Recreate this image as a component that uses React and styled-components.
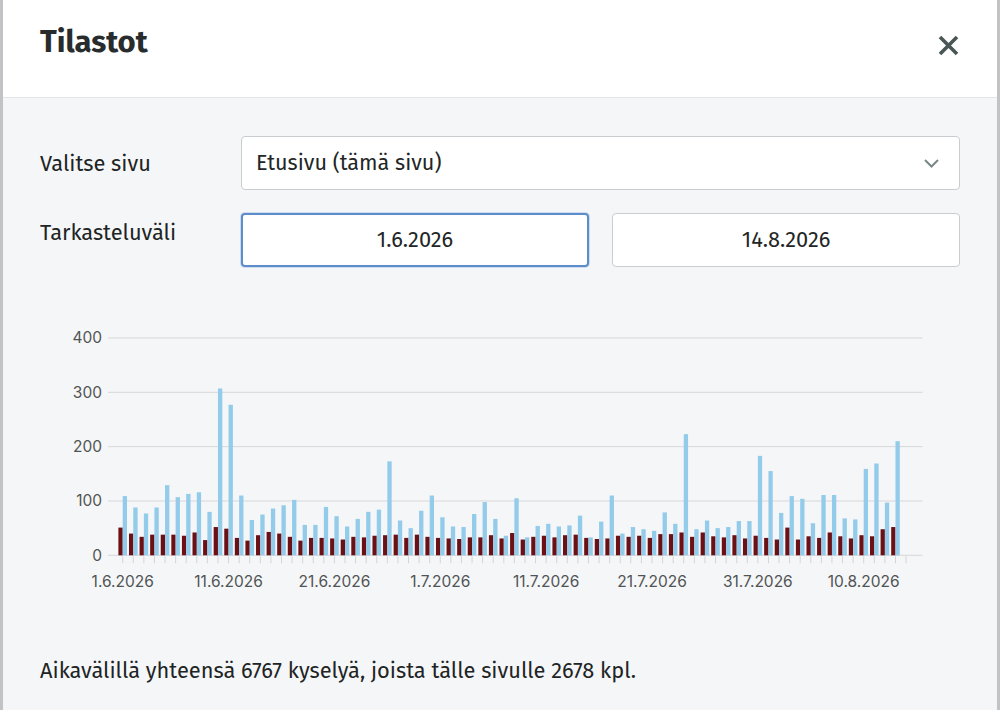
import React from 'react';
import styled, { createGlobalStyle } from 'styled-components';

const FONT = `"Fira Sans", "Roboto", "Noto Sans", sans-serif`;

const GlobalStyle = createGlobalStyle`
  html, body { margin: 0; padding: 0; }
  body {
    background: #c2c3c4;
    font-family: ${FONT};
    color: #222626;
  }
  * { box-sizing: border-box; }
`;

const Backdrop = styled.div`
  display: flex;
  justify-content: center;
  padding: 0 3px;
  min-height: 710px;
`;

const Dialog = styled.div`
  flex: 1;
  display: flex;
  flex-direction: column;
  background: #f5f6f8;
  min-height: 710px;
`;

const Header = styled.header`
  height: 98px;
  background: #ffffff;
  border-bottom: 1px solid #e3e6e9;
  display: flex;
  align-items: flex-start;
  justify-content: space-between;
  padding: 22px 38px 0 37px;
`;

const Title = styled.h1`
  margin: 0;
  font-size: 31px;
  line-height: 40px;
  font-weight: 700;
  color: #282c2c;
`;

const CloseButton = styled.button`
  border: 0;
  background: transparent;
  padding: 0;
  margin-top: 13px;
  width: 21px;
  height: 21px;
  display: flex;
  cursor: pointer;
`;

const Body = styled.main`
  padding: 38px 37px 0 37px;
  display: flex;
  flex-direction: column;
`;

const Form = styled.div`
  display: grid;
  grid-template-columns: 201px 1fr;
  row-gap: 23px;
`;

const Label = styled.label`
  font-size: 21.8px;
  line-height: 28px;
  color: #202424;
  align-self: ${p => (p.$top ? 'start' : 'center')};
  padding-top: ${p => (p.$top ? '6px' : '1px')};
`;

const SelectBox = styled.div`
  height: 54px;
  background: #fff;
  border: 1px solid #c9cdd0;
  border-radius: 4px;
  display: flex;
  align-items: center;
  justify-content: space-between;
  padding: 0 20px 0 14px;
  font-size: 21.6px;
  color: #222626;
`;

const DatePair = styled.div`
  display: grid;
  grid-template-columns: 1fr 1fr;
  column-gap: 23px;
`;

const DateField = styled.div`
  height: 54px;
  background: #fff;
  border: ${p => (p.$focused ? '2px solid #5d8dcb' : '1px solid #c9cdd0')};
  box-shadow: ${p => (p.$focused ? '0 0 0 1px rgba(93,141,203,0.25)' : 'none')};
  border-radius: 4px;
  display: flex;
  align-items: center;
  justify-content: center;
  font-size: 21.8px;
  color: #222626;
`;

const ChartWrap = styled.div`
  margin-top: 53px;
  height: 290px;
  display: flex;
`;

const Summary = styled.p`
  margin: 46px 0 0 0;
  font-size: 21.8px;
  line-height: 30px;
  color: #202424;
`;

const blue = [
  109, 88, 77, 88, 129, 107, 113, 116, 80, 307, 277, 110, 65, 75, 86, 92, 102, 56, 56, 89, 72, 53, 67,
  80, 84, 173, 64, 50, 82, 110, 70, 53, 52, 76, 98, 67, 36, 105, 33, 54, 58, 53, 55, 73, 33, 62, 110, 40, 52,
  48, 45, 79, 58, 223, 48, 64, 50, 52, 63, 63, 183, 155, 78, 109, 104, 59, 111, 111, 68, 66, 159, 169, 97, 210,
];
const dark = [
  51, 40, 34, 38, 38, 38, 36, 42, 28, 52, 49, 32, 27, 37, 43, 40, 34, 27, 32, 32, 31, 29, 34,
  33, 36, 37, 38, 32, 38, 34, 32, 31, 30, 33, 33, 37, 31, 41, 29, 34, 36, 33, 37, 38, 32, 30, 31, 36, 34,
  36, 32, 39, 39, 42, 34, 42, 35, 33, 37, 31, 36, 32, 29, 51, 29, 35, 32, 42, 35, 31, 37, 35, 48, 52,
];

const X0 = 122.7;
const STEP = 10.586;
const Y0 = 555.3;
const SCALE = 0.5433;
const BW = 4.3;

const startDate = new Date(2026, 5, 1);
const labelFor = i => {
  const d = new Date(startDate.getTime() + i * 86400000);
  return `${d.getDate()}.${d.getMonth() + 1}.${d.getFullYear()}`;
};

function Chart() {
  const yTicks = [0, 100, 200, 300, 400];
  const cats = Array.from({ length: 75 }, (_, i) => i);
  return (
    <svg width="920" height="290" viewBox="40 320 920 290" aria-label="Kyselyt päivittäin">
      {yTicks.map(v => {
        const y = Y0 - v * SCALE;
        return (
          <g key={v}>
            <line x1="108" x2="922.5" y1={y} y2={y} stroke="#d6d7d9" strokeWidth="1" />
            <text
              x="102"
              y={y}
              textAnchor="end"
              dominantBaseline="central"
              fontFamily="Inter, 'Liberation Sans', sans-serif"
              fontSize="15.5"
              fill="#505454"
            >
              {v}
            </text>
          </g>
        );
      })}
      {cats.map(i => {
        const x = X0 + i * STEP;
        return <line key={'t' + i} x1={x} x2={x} y1={Y0 + 1} y2={Y0 + 8} stroke="#d4d5d7" strokeWidth="1" />;
      })}
      {blue.map((v, i) => {
        const x = X0 + i * STEP;
        return (
          <g key={'b' + i}>
            <rect x={x - BW} y={Y0 - dark[i] * SCALE} width={BW} height={dark[i] * SCALE} fill="#6b1116" />
            <rect x={x} y={Y0 - v * SCALE} width={BW} height={v * SCALE} fill="#93cbea" />
          </g>
        );
      })}
      {cats
        .filter(i => i % 10 === 0)
        .map(i => (
          <text
            key={'l' + i}
            x={X0 + i * STEP}
            y="581"
            textAnchor="middle"
            dominantBaseline="central"
            fontFamily="Inter, 'Liberation Sans', sans-serif"
            fontSize="15.5"
            fill="#505454"
          >
            {labelFor(i)}
          </text>
        ))}
    </svg>
  );
}

export default function App() {
  return (
    <>
      <GlobalStyle />
      <Backdrop>
        <Dialog>
          <Header>
            <Title>Tilastot</Title>
            <CloseButton aria-label="Sulje">
              <svg width="21" height="21" viewBox="0 0 21 21">
                <path d="M2 2 L19 19 M19 2 L2 19" stroke="#4a5656" strokeWidth="3.6" strokeLinecap="butt" />
              </svg>
            </CloseButton>
          </Header>
          <Body>
            <Form>
              <Label>Valitse sivu</Label>
              <SelectBox>
                <span>Etusivu (tämä sivu)</span>
                <svg width="15" height="9" viewBox="0 0 15 9">
                  <path d="M1 1 L7.5 7.5 L14 1" fill="none" stroke="#7b8787" strokeWidth="2" />
                </svg>
              </SelectBox>
              <Label $top>Tarkasteluväli</Label>
              <DatePair>
                <DateField $focused>1.6.2026</DateField>
                <DateField>14.8.2026</DateField>
              </DatePair>
            </Form>
            <ChartWrap>
              <Chart />
            </ChartWrap>
            <Summary>Aikavälillä yhteensä 6767 kyselyä, joista tälle sivulle 2678 kpl.</Summary>
          </Body>
        </Dialog>
      </Backdrop>
    </>
  );
}
